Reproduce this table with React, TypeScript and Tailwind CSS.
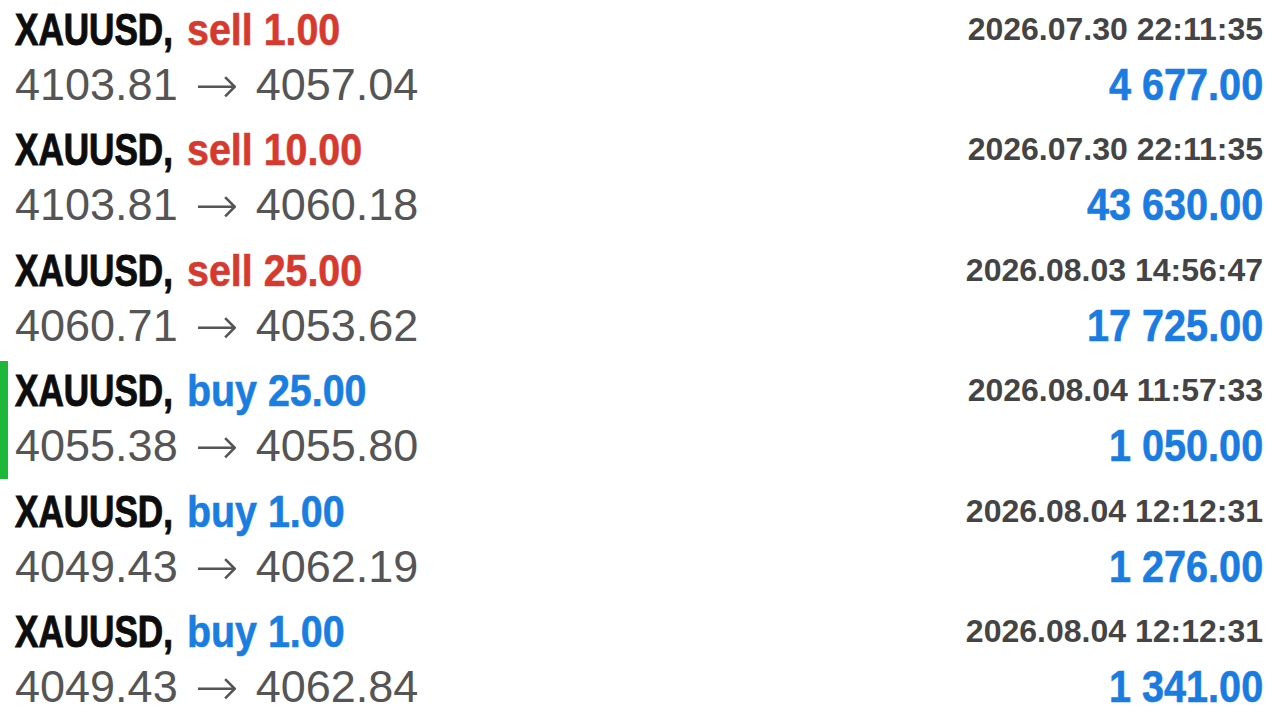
import React from "react";

type Row = {
  side: "sell" | "buy";
  vol: string;
  open: string;
  close: string;
  time: string;
  profit: string;
  marked?: boolean;
};

const rows: Row[] = [
  { side: "sell", vol: "1.00", open: "4103.81", close: "4057.04", time: "2026.07.30 22:11:35", profit: "4 677.00" },
  { side: "sell", vol: "10.00", open: "4103.81", close: "4060.18", time: "2026.07.30 22:11:35", profit: "43 630.00" },
  { side: "sell", vol: "25.00", open: "4060.71", close: "4053.62", time: "2026.08.03 14:56:47", profit: "17 725.00" },
  { side: "buy", vol: "25.00", open: "4055.38", close: "4055.80", time: "2026.08.04 11:57:33", profit: "1 050.00", marked: true },
  { side: "buy", vol: "1.00", open: "4049.43", close: "4062.19", time: "2026.08.04 12:12:31", profit: "1 276.00" },
  { side: "buy", vol: "1.00", open: "4049.43", close: "4062.84", time: "2026.08.04 12:12:31", profit: "1 341.00" },
];

const sans = "font-['Liberation_Sans',Arial,sans-serif]";

function TradeRow({ r }: { r: Row }) {
  return (
    <div className="relative flex h-[120.4px] justify-between pl-[15px] pr-[17px]">
      {r.marked && <div className="absolute left-0 top-0 h-[118px] w-[8px] bg-[#1db83a]" />}
      <div className="flex flex-col">
        <div className={`flex h-[60px] items-center text-[45px] leading-[60px] font-bold ${sans} whitespace-nowrap`}>
          <span className="inline-block w-[172px]">
            <span className="inline-block origin-left scale-x-[0.78] text-[#0d0d0d] [-webkit-text-stroke:1px_#0d0d0d]">
              XAUUSD,
            </span>
          </span>
          <span
            className={`inline-block origin-left scale-x-[0.875] ${
              r.side === "sell"
                ? "text-[#d63a2f] [-webkit-text-stroke:0.6px_#d63a2f]"
                : "text-[#1a7ee0] [-webkit-text-stroke:0.6px_#1a7ee0]"
            }`}
          >
            {r.side} {r.vol}
          </span>
        </div>
        <div className={`flex h-[50px] items-center text-[45px] leading-[50px] text-[#555555] ${sans} whitespace-nowrap`}>
          <span>{r.open}</span>
          <span className="inline-block w-[78px] text-center font-['DejaVu_Sans',sans-serif] text-[52px] font-extralight">
            →
          </span>
          <span>{r.close}</span>
        </div>
      </div>
      <div className="flex flex-col items-end">
        <div className={`h-[58px] text-[32px] leading-[58px] font-bold text-[#444444] ${sans} whitespace-nowrap`}>
          {r.time}
        </div>
        <div className={`h-[54px] text-[45px] leading-[54px] font-bold text-[#1a7be0] ${sans} whitespace-nowrap`}>
          <span className="inline-block origin-right scale-x-[0.88] [-webkit-text-stroke:0.6px_#1a7be0]">{r.profit}</span>
        </div>
      </div>
    </div>
  );
}

export default function App() {
  return (
    <div className="h-[720px] w-[1280px] overflow-hidden bg-white">
      {rows.map((r, i) => (
        <TradeRow key={i} r={r} />
      ))}
    </div>
  );
}
